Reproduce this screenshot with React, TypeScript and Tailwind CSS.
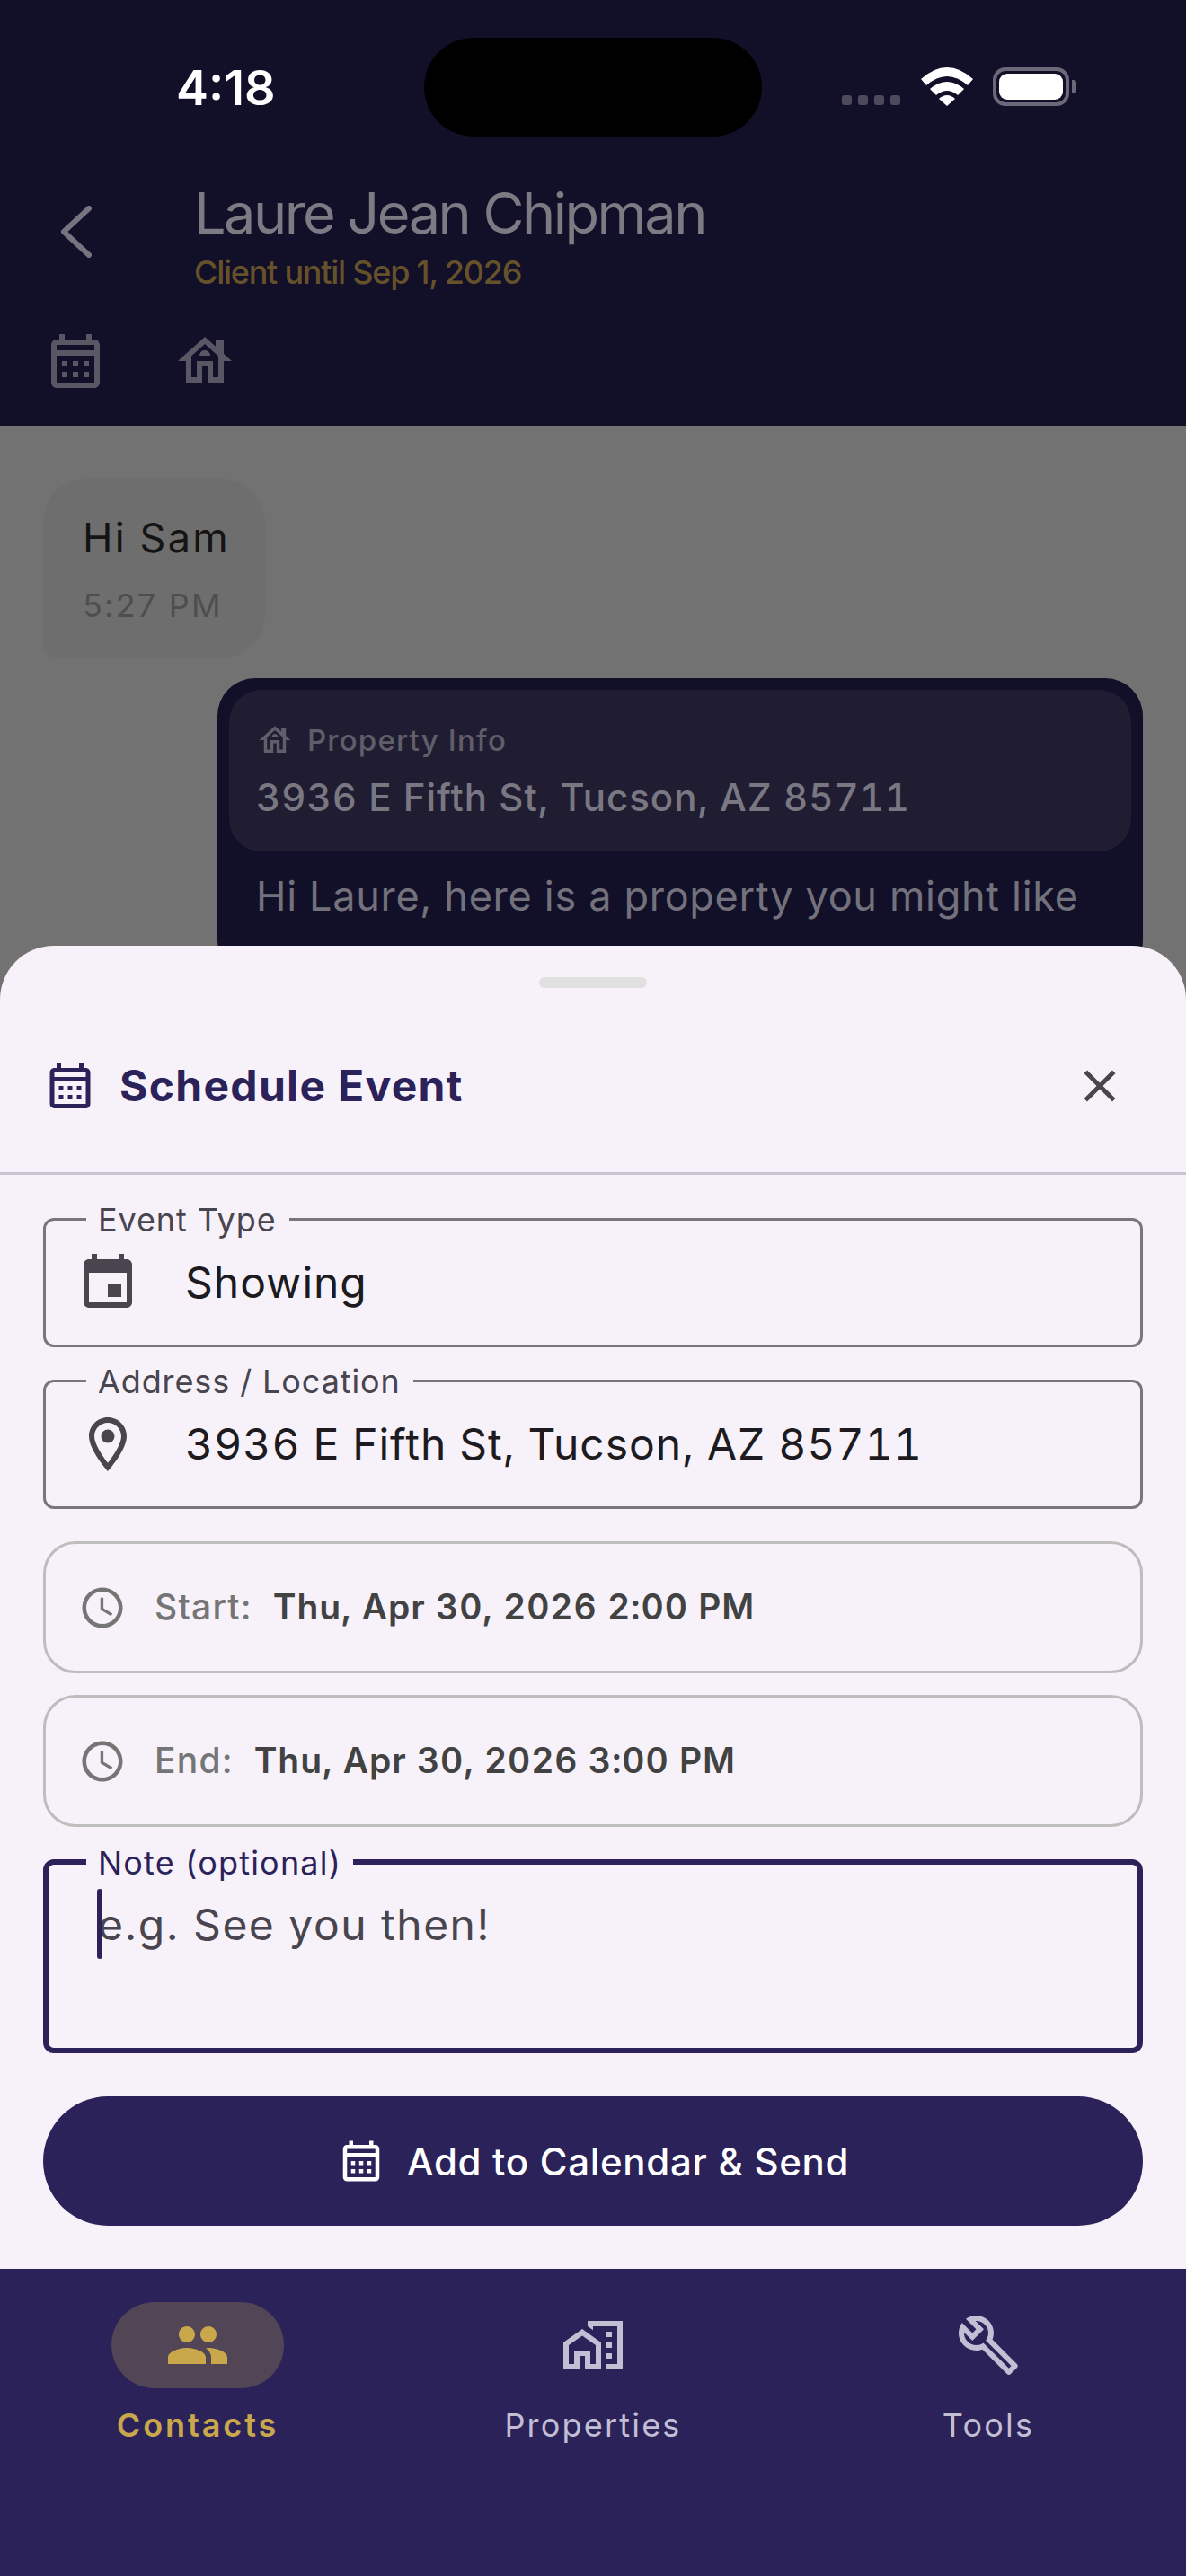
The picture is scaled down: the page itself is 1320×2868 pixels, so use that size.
import React from "react";
import {
  MdOutlineCalendarMonth,
  MdOutlineHouse,
  MdEvent,
  MdOutlineLocationOn,
  MdAccessTime,
  MdClose,
  MdPeople,
  MdOutlineMapsHomeWork,
  MdOutlineBuild,
} from "react-icons/md";

function StatusBar() {
  return (
    <div className="relative h-[190px] shrink-0">
      <div className="absolute left-[196px] top-[68px] text-[54px] leading-[60px] font-semibold text-white">4:18</div>
      <div className="absolute left-[472px] top-[42px] h-[110px] w-[376px] rounded-full bg-black" />
      <div className="absolute left-[937px] top-[106px] flex gap-[7px]">
        <div className="h-[11px] w-[11px] rounded-[3px] bg-[#4c4a5c]" />
        <div className="h-[11px] w-[11px] rounded-[3px] bg-[#4c4a5c]" />
        <div className="h-[11px] w-[11px] rounded-[3px] bg-[#4c4a5c]" />
        <div className="h-[11px] w-[11px] rounded-[3px] bg-[#4c4a5c]" />
      </div>
      <svg className="absolute left-[1025px] top-[75px]" width="58" height="43" viewBox="0 0 58 43">
        <path d="M0 13 Q29 -13 58 13 L52 20 Q29 0 6 20 Z" fill="#fff" />
        <path d="M10 24 Q29 8 48 24 L41 31 Q29 21 17 31 Z" fill="#fff" />
        <path d="M20 35 Q29 27 38 35 L29 43 Z" fill="#fff" />
      </svg>
      <div className="absolute left-[1105px] top-[75px] h-[43px] w-[85px] rounded-[14px] border-[4px] border-[#6b6979] p-[3px]">
        <div className="h-full w-full rounded-[9px] bg-white" />
      </div>
      <div className="absolute left-[1193px] top-[89px] h-[15px] w-[5px] rounded-r-[3px] bg-[#6b6979]" />
    </div>
  );
}

function Header() {
  return (
    <div className="flex h-[474px] shrink-0 flex-col bg-[#120f29]">
      <StatusBar />
      <div className="flex items-start">
        <svg className="ml-[66px] mt-[39px] shrink-0" width="36" height="58" viewBox="0 0 36 58" fill="none">
          <path d="M33 3 L5 29 L33 55" stroke="#757480" strokeWidth="6" strokeLinecap="round" strokeLinejoin="round" />
        </svg>
        <div className="ml-[114px] flex flex-col">
          <div className="mt-[10px] text-[63px] leading-[74px] tracking-[-2.5px] text-[#7c7b83]">Laure Jean Chipman</div>
          <div className="mt-[7px] text-[36px] leading-[44px] font-medium tracking-[-1.25px] text-[#66522a]">Client until Sep 1, 2026</div>
        </div>
      </div>
      <div className="ml-[48px] mt-[41px] flex items-center gap-[72px]">
        <MdOutlineCalendarMonth className="h-[72px] w-[72px] text-[#585763]" />
        <MdOutlineHouse className="h-[72px] w-[72px] text-[#585763]" />
      </div>
    </div>
  );
}

function Chat() {
  return (
    <div className="flex flex-col px-[48px] pt-[59px]">
      <div className="h-[199px] w-[247px] rounded-[48px] rounded-bl-[12px] bg-[#6e6e6e] pl-[44px] pt-[36px]">
        <div className="text-[45px] leading-[60px] tracking-[2.2px] text-[#141414]">Hi Sam</div>
        <div className="mt-[21px] text-[36px] leading-[48px] tracking-[2.2px] text-[#4e4e4e]">5:27 PM</div>
      </div>
      <div className="ml-[194px] mt-[23px] w-[1030px] rounded-[42px] bg-[#120f29] px-[13px] pt-[13px]">
        <div className="h-[180px] rounded-[36px] bg-[#201d33] px-[30px] pt-[35px]">
          <div className="flex items-center gap-[15px]">
            <MdOutlineHouse className="h-[42px] w-[42px] text-[#5f5e69]" />
            <span className="text-[33px] leading-[40px] font-medium tracking-[1.2px] text-[#5f5e69]">Property Info</span>
          </div>
          <div className="mt-[17px] whitespace-nowrap text-[42px] leading-[52px] font-medium tracking-[1px] tabular-nums text-[#797882]">3936 E Fifth St, Tucson, AZ 85711</div>
        </div>
        <div className="whitespace-nowrap px-[30px] pt-[22px] text-[45px] leading-[56px] tracking-[0.7px] text-[#73727c]">Hi Laure, here is a property you might like</div>
        <div className="mt-[16px] flex justify-end pr-[62px] text-[36px] leading-[48px] tracking-[1.7px] text-[#5a5964]">5:27 PM</div>
      </div>
    </div>
  );
}

function Field({ label, icon, value }: { label: string; icon: React.ReactNode; value: string }) {
  return (
    <div className="relative flex h-[144px] items-center rounded-[12px] border-[3px] border-[#79747e]">
      <span className="absolute left-[45px] top-[-23px] bg-[#f7f2fa] pl-[13px] pr-[14px] text-[36px] leading-[44px] tracking-[0.9px] text-[#49454f]">{label}</span>
      <div className="ml-[33px] flex w-[72px] shrink-0 justify-center">{icon}</div>
      <span className="ml-[50px] text-[48px] leading-[60px] tracking-[1px] tabular-nums text-[#1d1b20]">{value}</span>
    </div>
  );
}

function DateRow({ label, value }: { label: string; value: string }) {
  return (
    <div className="flex h-[147px] items-center rounded-[36px] border-[3px] border-[#bdbdbd] pl-[36px]">
      <MdAccessTime className="h-[54px] w-[54px] text-[#757575]" />
      <span className="ml-[31px] text-[39px] font-medium tracking-[1.2px] text-[#757575]">{label}</span>
      <span className="ml-[23px] text-[39px] font-semibold tracking-[0.9px] tabular-nums text-[#424242]">{value}</span>
    </div>
  );
}

function Sheet() {
  return (
    <div className="absolute inset-x-0 bottom-0 flex h-[1473px] flex-col rounded-t-[60px] bg-[#f7f2fa]">
      <div className="mx-auto mt-[35px] h-[12px] w-[120px] rounded-[6px] bg-[#e0e0e0]" />
      <div className="flex h-[205px] items-center justify-between pl-[48px] pr-[66px] pt-[12px]">
        <div className="flex items-center gap-[25px]">
          <MdOutlineCalendarMonth className="h-[60px] w-[60px] text-[#2c225a]" />
          <span className="text-[48px] leading-[60px] font-bold tracking-[1.3px] text-[#2c225a]">Schedule Event</span>
        </div>
        <MdClose className="h-[60px] w-[60px] text-[#49454f]" />
      </div>
      <div className="h-[3px] bg-[#cac4d0]" />
      <div className="flex flex-col px-[48px] pt-[48px]">
        <Field label="Event Type" value="Showing" icon={<MdEvent className="mt-[2px] h-[72px] w-[72px] text-[#49454f]" />} />
        <div className="h-[36px]" />
        <Field label="Address / Location" value="3936 E Fifth St, Tucson, AZ 85711" icon={<MdOutlineLocationOn className="h-[72px] w-[72px] text-[#49454f]" />} />
        <div className="h-[36px]" />
        <DateRow label="Start:" value="Thu, Apr 30, 2026 2:00 PM" />
        <div className="h-[24px]" />
        <DateRow label="End:" value="Thu, Apr 30, 2026 3:00 PM" />
        <div className="h-[36px]" />
        <div className="relative h-[216px] rounded-[12px] border-[6px] border-[#2c225a]">
          <span className="absolute left-[42px] top-[-24px] bg-[#f7f2fa] pl-[13px] pr-[13px] text-[36px] leading-[44px] tracking-[1.2px] text-[#2c225a]">Note (optional)</span>
          <div className="absolute left-[54px] top-[27px] h-[78px] w-[6px] rounded-full bg-[#2c225a]" />
          <div className="pl-[55px] pt-[37px] text-[48px] leading-[60px] tracking-[1.5px] text-[#49454f]">e.g. See you then!</div>
        </div>
        <div className="mt-[48px] flex h-[144px] items-center justify-center gap-[24px] rounded-full bg-[#2c225a]">
          <MdOutlineCalendarMonth className="h-[54px] w-[54px] text-white" />
          <span className="text-[42px] font-medium tracking-[0.7px] text-white">Add to Calendar &amp; Send</span>
        </div>
      </div>
    </div>
  );
}

function NavItem({ label, active, icon }: { label: string; active?: boolean; icon: React.ReactNode }) {
  return (
    <div className="flex flex-col items-center">
      <div className={active ? "flex h-[96px] w-[192px] items-center justify-center rounded-full bg-[#524555]" : "flex h-[96px] w-[192px] items-center justify-center"}>
        {icon}
      </div>
      <span className={active ? "mt-[19px] text-[36px] leading-[44px] font-semibold tracking-[2.9px] text-[#c9a84c]" : "mt-[19px] text-[36px] leading-[44px] tracking-[2.2px] text-[#c2bed3]"}>{label}</span>
    </div>
  );
}

export default function App() {
  return (
    <div className="flex h-[2868px] w-[1320px] flex-col overflow-hidden bg-[#727272] [font-family:Inter,sans-serif]">
      <Header />
      <div className="relative flex-1 overflow-hidden">
        <Chat />
        <Sheet />
      </div>
      <div className="grid h-[342px] shrink-0 grid-cols-3 bg-[#2c225a] pt-[37px]">
        <NavItem label="Contacts" active icon={<MdPeople className="h-[72px] w-[72px] text-[#c9a84c]" />} />
        <NavItem label="Properties" icon={<MdOutlineMapsHomeWork className="h-[72px] w-[72px] text-[#c2bed3]" />} />
        <NavItem label="Tools" icon={<MdOutlineBuild className="h-[72px] w-[72px] text-[#c2bed3]" />} />
      </div>
    </div>
  );
}
